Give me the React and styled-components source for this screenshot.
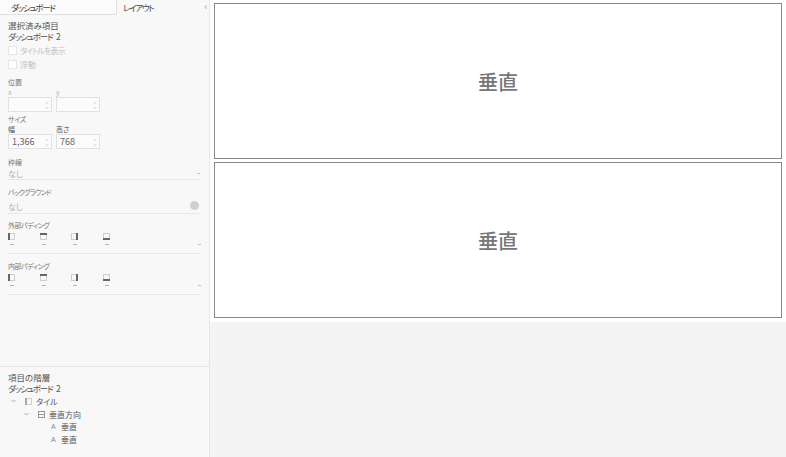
import styled, { createGlobalStyle } from 'styled-components'

const GlobalStyle = createGlobalStyle`
  html, body { margin: 0; padding: 0; height: 100%; overflow: hidden; }
  body {
    font-family: "Noto Sans CJK JP", "Liberation Sans", sans-serif;
    font-feature-settings: "palt";
    background: #f4f4f4;
  }
`

const Page = styled.div`
  width: 786px;
  height: 457px;
  display: flex;
`

const Sidebar = styled.aside`
  width: 209px;
  height: 457px;
  flex: none;
  display: flex;
  flex-direction: column;
  background: #f8f8f8;
  border-right: 1px solid #e6e6e6;
`

const Tabs = styled.div`
  height: 15px;
  display: flex;
  font-size: 8.5px;
  line-height: 14px;
  letter-spacing: -1.3px;
  color: #444;
`

const Tab = styled.div`
  width: ${p => p.$w}px;
  padding-left: ${p => p.$pad}px;
  box-sizing: border-box;
  background: ${p => (p.$active ? '#fbfbfb' : 'transparent')};
  border-bottom: ${p => (p.$active ? '1px solid #e0e0e0' : 'none')};
  border-right: ${p => (p.$active ? '1px solid #e0e0e0' : 'none')};
`

const Collapse = styled.div`
  margin-left: auto;
  margin-right: 3px;
  color: #888;
  font-size: 9px;
`

const Props = styled.div`
  flex: 1;
  padding: 5px 8px 0;
  display: flex;
  flex-direction: column;
`

const Heading = styled.div`
  font-size: 8.5px;
  line-height: 11px;
  letter-spacing: ${p => (p.$tight ? '-1.2px' : '0')};
  word-spacing: ${p => (p.$tight ? '3px' : '0')};
  color: #555;
`

const CheckRow = styled.div`
  display: flex;
  align-items: center;
  gap: 3px;
  height: 14px;
  margin-top: ${p => p.$top}px;
  font-size: 8px;
  letter-spacing: ${p => (p.$tight ? '-0.9px' : '0')};
  color: #c0c0c0;
`

const Box = styled.span`
  width: 7px;
  height: 7px;
  background: #fff;
  border: 1px solid #e6e6e6;
`

const Label = styled.div`
  font-size: 7px;
  line-height: 10px;
  letter-spacing: ${p => p.$spacing || 0}px;
  color: ${p => p.$color || '#777'};
  margin-top: ${p => p.$top || 0}px;
`

const Fields = styled.div`
  display: flex;
  gap: 4px;
`

const FieldCol = styled.div`
  width: 44px;
  display: flex;
  flex-direction: column;
`

const Spin = styled.div`
  height: 13px;
  display: flex;
  align-items: center;
  padding-left: 3px;
  background: #fbfbfb;
  border: 1px solid #e2e2e2;
  font-size: 9px;
  color: #666;
  position: relative;
`

const Arrows = styled.span`
  position: absolute;
  right: 3px;
  top: 2px;
  font-size: 4px;
  line-height: 5px;
  color: #bbb;
  white-space: pre;
`

const Select = styled.div`
  height: ${p => p.$h}px;
  box-sizing: border-box;
  padding: ${p => p.$pad || 0}px 1px 0 0;
  display: flex;
  align-items: center;
  justify-content: space-between;
  border-bottom: 1px solid #e8e8e8;
  font-size: 8px;
  color: #b0b0b0;
`

const Caret = styled.span`
  width: 3px;
  height: 1px;
  background: #c4c4c4;
  align-self: ${p => (p.$end ? 'flex-end' : 'center')};
  margin-bottom: ${p => (p.$end ? 8 : 0)}px;
`

const Swatch = styled.span`
  width: 9px;
  height: 9px;
  margin: -2px 1px 0 0;
  border-radius: 50%;
  background: #d0d0d0;
`

const PadRow = styled.div`
  height: 24px;
  display: flex;
  padding-top: 3px;
  box-sizing: border-box;
  border-bottom: 1px solid #e8e8e8;
  justify-content: space-between;
`

const PadCells = styled.div`
  display: flex;
  gap: 19.7px;
`

const PadCell = styled.div`
  width: 12px;
  display: flex;
  flex-direction: column;
  gap: 4px;
`

const Dash = styled.span`
  width: 4px;
  height: 1px;
  margin-left: 2px;
  background: #b4b4b4;
`

const Tree = styled.div`
  height: 91px;
  padding: 5px 8px 0;
  border-top: 1px solid #e4e4e4;
  box-sizing: border-box;
`

const TreeRow = styled.div`
  height: 12.7px;
  display: flex;
  align-items: center;
  padding-left: ${p => p.$indent}px;
  font-size: 8px;
  color: #555;
`

const TreeTop = styled.div`
  height: 1px;
`

const Chevron = styled.span`
  width: 14px;
  flex: none;
  display: flex;
`

const NodeIcon = styled.span`
  width: ${p => p.$w || 11}px;
  flex: none;
  display: flex;
  align-items: center;
  color: #888;
  font-size: 7px;
  font-family: "Liberation Sans", sans-serif;
`

const Main = styled.main`
  flex: 1;
  min-width: 0;
`

const Canvas = styled.div`
  height: 322px;
  box-sizing: border-box;
  padding: 3px 4px 4px 4px;
  background: #fff;
  display: flex;
  flex-direction: column;
  gap: 3px;
`

const Panel = styled.div`
  flex: 1;
  border: 1px solid #888;
  display: flex;
  align-items: center;
  justify-content: center;
  font-size: 20px;
  font-weight: 500;
  color: #777;
`

const PadIcon = ({ side, soft }) => {
  const fill = soft ? '#aaa' : '#666'
  const bars = {
    left: { x: 0, y: 0, width: 2, height: 7 },
    top: { x: 0, y: 0, width: 7, height: 2 },
    right: { x: 5, y: 0, width: 2, height: 7 },
    bottom: { x: 0, y: 5, width: 7, height: 2 },
  }
  return (
    <svg width="7" height="7" viewBox="0 0 7 7">
      <rect x="0.5" y="0.5" width="6" height="6" fill="none" stroke="#cfcfcf" />
      <rect {...bars[side]} fill={fill} />
    </svg>
  )
}

const SplitIcon = () => (
  <svg width="7" height="7" viewBox="0 0 7 7">
    <rect x="0.5" y="0.5" width="6" height="6" fill="none" stroke="#999" />
    <path d="M0.5 3.5 H6.5" stroke="#999" />
  </svg>
)

const Chev = () => (
  <svg width="5" height="4" viewBox="0 0 5 4">
    <path d="M0.5 1 L2.5 3 L4.5 1" fill="none" stroke="#aaa" />
  </svg>
)

const Padding = ({ title, top }) => (
  <>
    <Label $top={top} $spacing={-0.5}>{title}</Label>
    <PadRow>
      <PadCells>
        {['left', 'top', 'right', 'bottom'].map(s => (
          <PadCell key={s}>
            <PadIcon side={s} />
            <Dash />
          </PadCell>
        ))}
      </PadCells>
      <Caret $end />
    </PadRow>
  </>
)

const SpinField = ({ value }) => (
  <Spin>
    {value}
    <Arrows>{'˄\n˅'}</Arrows>
  </Spin>
)

const App = () => (
  <Page>
    <GlobalStyle />
    <Sidebar>
      <Tabs>
        <Tab $w={117} $pad={11} $active>ダッシュボード</Tab>
        <Tab $w={60} $pad={6}>レイアウト</Tab>
        <Collapse>‹</Collapse>
      </Tabs>
      <Props>
        <Heading>選択済み項目</Heading>
        <Heading $tight>ダッシュボード 2</Heading>
        <CheckRow $top={1} $tight><Box />タイトルを表示</CheckRow>
        <CheckRow $top={0}><Box />浮動</CheckRow>
        <Label $top={6}>位置</Label>
        <Fields>
          <FieldCol><Label $color="#b0b0b0">x</Label><SpinField /></FieldCol>
          <FieldCol><Label $color="#b0b0b0">y</Label><SpinField /></FieldCol>
        </Fields>
        <Label $top={2} $spacing={-0.4}>サイズ</Label>
        <Fields>
          <FieldCol><Label $color="#555">幅</Label><SpinField value="1,366" /></FieldCol>
          <FieldCol><Label $color="#555">高さ</Label><SpinField value="768" /></FieldCol>
        </Fields>
        <Label $top={8}>枠線</Label>
        <Select $h={13}>なし<Caret /></Select>
        <Label $top={7} $spacing={-0.7}>バックグラウンド</Label>
        <Select $h={17} $pad={2}>なし<Swatch /></Select>
        <Padding title="外部パディング" top={6} />
        <Padding title="内部パディング" top={7} />
      </Props>
      <Tree>
        <Heading>項目の階層</Heading>
        <Heading $tight>ダッシュボード 2</Heading>
        <TreeTop />
        <TreeRow $indent={3}><Chevron><Chev /></Chevron><NodeIcon><PadIcon side="left" soft /></NodeIcon>タイル</TreeRow>
        <TreeRow $indent={16}><Chevron><Chev /></Chevron><NodeIcon><SplitIcon /></NodeIcon>垂直方向</TreeRow>
        <TreeRow $indent={43}><NodeIcon $w={10}>A</NodeIcon>垂直</TreeRow>
        <TreeRow $indent={43}><NodeIcon $w={10}>A</NodeIcon>垂直</TreeRow>
      </Tree>
    </Sidebar>
    <Main>
      <Canvas>
        <Panel>垂直</Panel>
        <Panel>垂直</Panel>
      </Canvas>
    </Main>
  </Page>
)

export default App
